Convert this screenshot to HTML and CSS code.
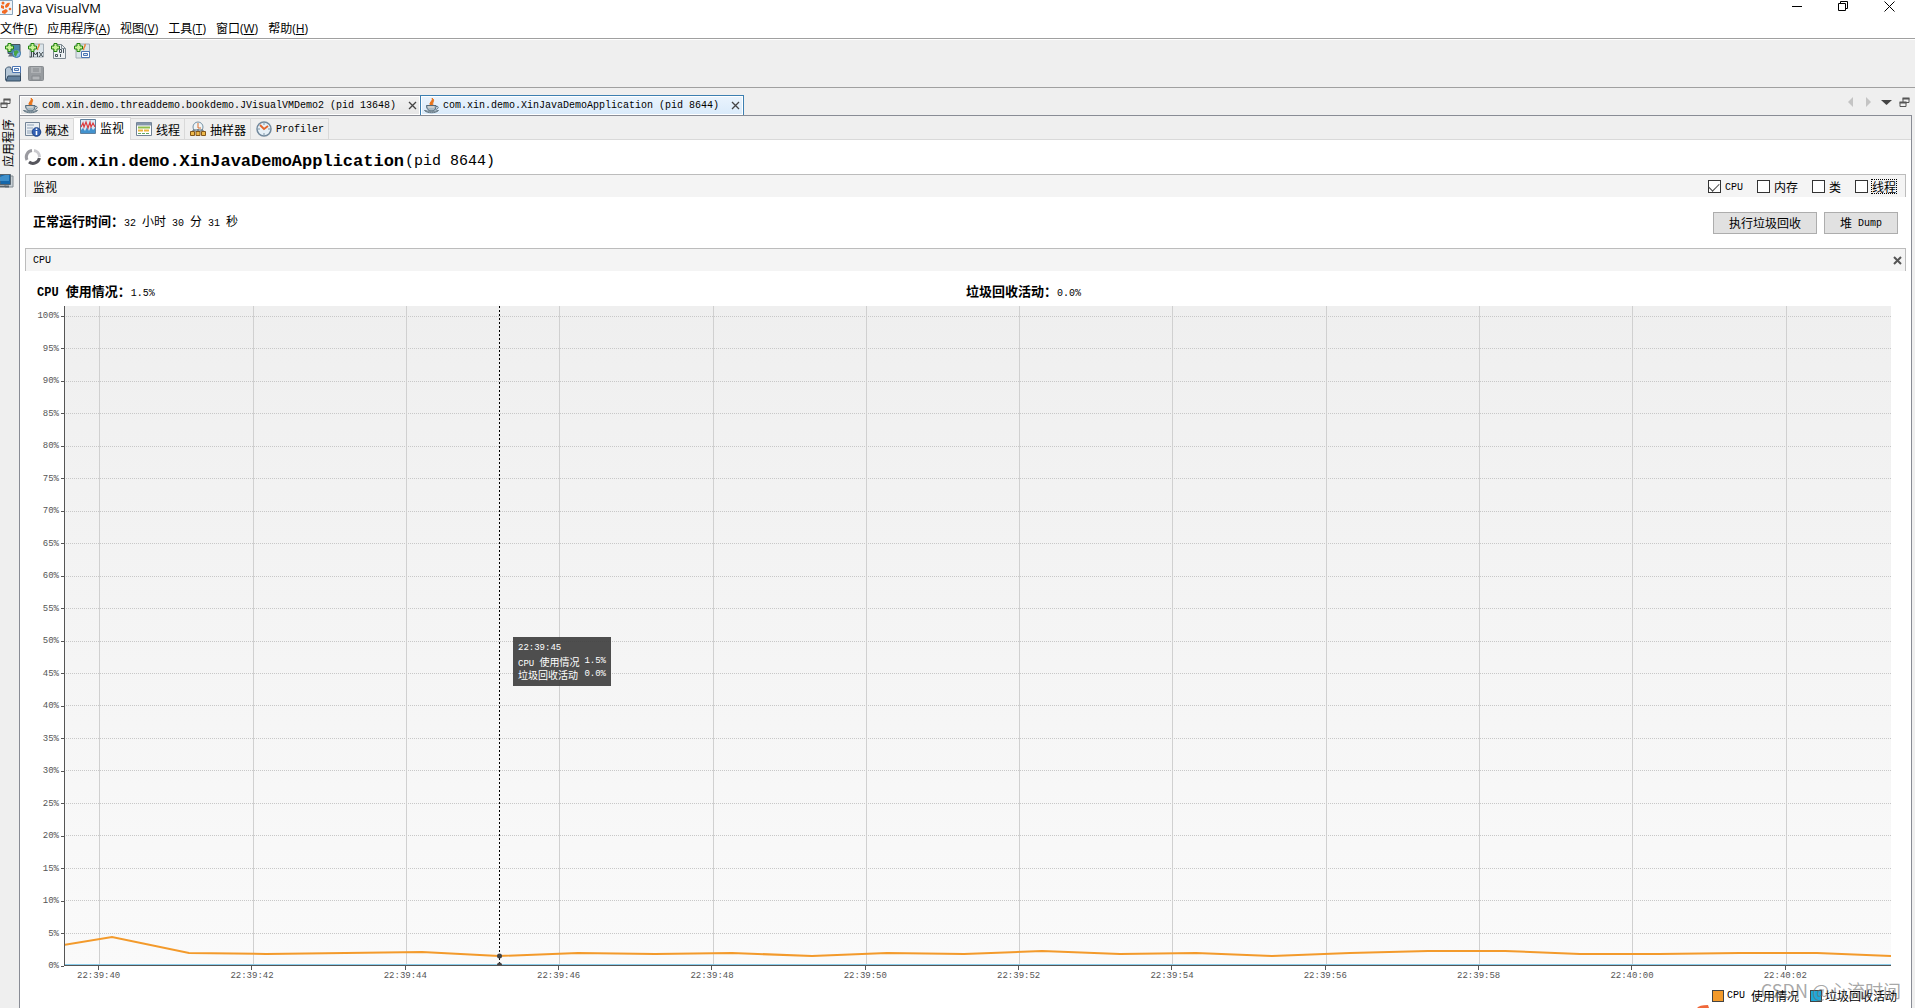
FILE: index.html
```html
<!DOCTYPE html>
<html lang="zh-CN">
<head>
<meta charset="utf-8">
<title>Java VisualVM</title>
<link rel="stylesheet" href="styles.css">
</head>
<body>
<svg class="defs" aria-hidden="true">
  <symbol id="plus" viewBox="0 0 16 16"><path d="M3 .5h3v2.500h2.500v3H6v2.500H3V6H.5V3H3z" fill="#c9f29a" stroke="#23850f"/></symbol>
  <symbol id="java" viewBox="0 0 16 16"><path d="M7.500 8C3 5 10 3 8 0c4 3-1 4 1.500 8z" fill="#e8741c" stroke="#e8741c"/><path d="M2.500 7.500h9.500c0 4-2 5.500-4.500 5.500s-5-1.500-5-5.500z" fill="#a9bac5" stroke="#546b7b"/><path d="M12 8.500c3-1 3 2.500-.5 3" fill="none" stroke="#546b7b"/><path d="M.5 12.500c3 3 11 3 14 0-3 1-11 1-14 0z" fill="#b9c5cd" stroke="#607481"/><path d="M4 9h6" stroke="#efe2d5"/></symbol>
  <symbol id="restore" viewBox="0 0 11 11"><path d="M4 5V1.500h6v4H7M1 5.500h6v4H1z" fill="none" stroke="#555"/><path d="M3.500 1.500h7M.5 5.500h7" stroke="#555" stroke-width="2"/></symbol>
  <symbol id="cross" viewBox="0 0 9 9"><path d="M1 1l7 7M8 1L1 8" stroke="currentColor" stroke-width="1.300"/></symbol>
</svg>

<header class="titlebar">
  <svg class="app-icon" viewBox="0 0 14 16"><path d="M-2 .5h14.500v14H-2" fill="#eef4f9" stroke="#89a5bd"/><path d="M5 7c0-3 3-5 5-4-1 2-1 4-4 5zM1 5l3 1v3L1 8zM2 11l4-2 2 2-3 3-3-1z" fill="#f26a24"/><circle cx="10" cy="9" r="1.300" fill="#f26a24"/><circle cx="3" cy="3" r="1.500" fill="#f26a24"/></svg>
  <span class="app-name">Java VisualVM</span>
  <div class="window-buttons">
    <button aria-label="最小化"><svg width="11" height="11"><path d="M0 5.500h10" stroke="#000"/></svg></button>
    <button aria-label="还原"><svg width="11" height="11"><path d="M.5 2.500h7v7h-7zM2.500 2V.5h7v7H8" fill="none" stroke="#000"/></svg></button>
    <button aria-label="关闭"><svg width="11" height="11"><path d="M.5.5l10 10M10.500.5l-10 10" stroke="#000"/></svg></button>
  </div>
</header>
<nav class="menubar">
  <button>文件(<u>F</u>)</button><button>应用程序(<u>A</u>)</button><button>视图(<u>V</u>)</button><button>工具(<u>T</u>)</button><button>窗口(<u>W</u>)</button><button>帮助(<u>H</u>)</button>
</nav>
<div class="toolbars">
  <div class="toolbar">
    <button aria-label="添加远程主机"><svg viewBox="0 0 16 16"><path d="M3 1.500h12v9H3z" fill="#4b89a8" stroke="#46545e"/><path d="M3 13.500h7l-1-3H5z" fill="#67747c"/><circle cx="11.500" cy="10.500" r="4" fill="#85b8e8" stroke="#3974a6"/><path d="M9 8l3-1 2 2-2 2-1 3-2-2z" fill="#48a447"/><use href="#plus"/></svg></button>
    <button aria-label="添加 JMX 连接"><svg viewBox="0 0 16 16"><path d="M2 1h13.500v13H2z" fill="#dce5ea" stroke="#a2acb4"/><path d="M10 7c-2-2 2-3 1-6" fill="none" stroke="#e88233" stroke-width="1.500"/><path d="M3.500 9v5H1.500M5.500 14V9l2 3 2-3v5M11 9l4 5M15 9l-4 5" fill="none" stroke="#414b50"/><use href="#plus"/></svg></button>
    <button aria-label="添加核心 Dump"><svg viewBox="0 0 16 16"><path d="M2.500 1.500h8l4 4v10h-12z" fill="#eef1f3" stroke="#7e8991"/><path d="M10.500 1.500v4h4" fill="none" stroke="#7e8991"/><path d="M8.500 6.500h2v3h-2zM12.500 6v4M4.500 11.500h2v2h-2zM9.500 11v3" fill="none" stroke="#47545d"/><use href="#plus"/></svg></button>
    <button aria-label="添加快照"><svg viewBox="0 0 16 16"><path d="M2 1h13.500v14H2z" fill="#dce5ea" stroke="#a2acb4"/><path d="M10 7c-2-2 2-3 1-6" fill="none" stroke="#e88233" stroke-width="1.500"/><path d="M7.500 8.500h8v6h-8z" fill="#fff" stroke="#4c75b2"/><path d="M9.500 10.500h4v2h-4z" fill="#d8e8fa" stroke="#4c75b2"/><use href="#plus"/></svg></button>
  </div>
  <div class="toolbar">
    <button aria-label="打开"><svg viewBox="0 0 16 16"><path d="M.5 14V3l2-2h3l1 3h9v10z" fill="#b5c6d6" stroke="#485f76"/><path d="M7.500.5h8v6h-8z" fill="#fff" stroke="#4c75b2"/><path d="M9.500 2.500h4v2h-4z" fill="#d8e8fa" stroke="#4c75b2"/><path d="M1 15l2-5h12.500v5z" fill="#64819e" stroke="#334a61"/></svg></button>
    <button aria-label="保存" disabled><svg viewBox="0 0 16 16"><rect x=".5" y=".5" width="15" height="14" rx="1" fill="#989ca0" stroke="#888c90"/><path d="M3 1h10v6H3z" fill="#aeb1b4"/><path d="M5 3h6M5 5h6M4 10h8v4H4z" fill="#b2b5b8" stroke="#84888c"/></svg></button>
  </div>
</div>

<div class="workspace">
  <aside class="side">
    <button aria-label="还原窗口组"><svg width="11" height="11"><use href="#restore"/></svg></button>
    <button class="side-label">应用程序</button>
    <svg class="side-icon" viewBox="0 0 14 16"><path d="M5 3h8v11H5z" fill="#c9d0d5" stroke="#818a91"/><path d="M0 1.500h10.500v10H0z" fill="#1667aa" stroke="#58656f"/><path d="M0 4l5-2h4v6H0z" fill="#3f8fca"/><path d="M0 13.500h9" stroke="#59636a" stroke-width="2"/></svg>
  </aside>
  <main class="editor">
    <div class="doc-tabs">
      <div class="doc-tab"><svg class="i16"><use href="#java"/></svg><a href="#demo2">com.xin.demo.threaddemo.bookdemo.JVisualVMDemo2 (pid 13648)</a><button aria-label="关闭标签"><svg width="9" height="9"><use href="#cross"/></svg></button></div>
      <div class="doc-tab current"><svg class="i16"><use href="#java"/></svg><a href="#app">com.xin.demo.XinJavaDemoApplication (pid 8644)</a><button aria-label="关闭标签"><svg width="9" height="9"><use href="#cross"/></svg></button></div>
      <div class="doc-nav">
        <button aria-label="向左滚动"><svg width="11" height="11"><path d="M8 0v10L3 5z" fill="#c4c4c4"/></svg></button>
        <button aria-label="向右滚动"><svg width="11" height="11"><path d="M3 0v10l5-5z" fill="#c4c4c4"/></svg></button>
        <button aria-label="文档列表"><svg width="11" height="11"><path d="M0 3h11L5.500 8z" fill="#444"/></svg></button>
        <button aria-label="还原"><svg width="11" height="11"><use href="#restore"/></svg></button>
      </div>
    </div>
    <div class="frame">
      <nav class="views">
        <a class="view" href="#overview"><svg class="i16" viewBox="0 0 16 16"><path d="M.5 1.500h14v13H.5z" fill="#e9eef3" stroke="#728396"/><path d="M2 4h7M2 7h6M2 10h5M2 12h5" stroke="#8fa2b7"/><circle cx="11.500" cy="11" r="4.300" fill="#315fb4" stroke="#183f86"/><path d="M11.500 10v4M11.500 7.500v1.500" stroke="#fff" stroke-width="1.600"/></svg>概述</a>
        <a class="view current" href="#monitor"><svg class="i16" viewBox="0 0 16 16"><path d="M.5.5h15v14H.5z" fill="#d9e9f5" stroke="#60809d"/><path d="M1 14v-3l2-2 2 3 2-4 2 4 2-4 2 3 2-2v5z" fill="#4292ce"/><path d="M1 8l2-4 1 4 2-5 2 6 2-6 1 5 2-4 2 4" fill="none" stroke="#dd3c3f" stroke-width="1.200"/></svg>监视</a>
        <a class="view" href="#threads"><svg class="i16" viewBox="0 0 16 16"><path d="M.5 1.500h15v13H.5z" fill="#fff" stroke="#728396"/><path d="M1 3h14" stroke="#8395aa" stroke-width="3"/><path d="M2 6.500h12" stroke="#8fbd4b" stroke-width="2"/><path d="M2 9.500h12" stroke="#edb43e" stroke-width="2" stroke-dasharray="5 1"/><path d="M2 12.500h12" stroke="#63aa63" stroke-dasharray="3 1"/></svg>线程</a>
        <a class="view" href="#sampler"><svg class="i16" viewBox="0 0 16 16"><circle cx="8" cy="6" r="5" fill="#eef5f8" stroke="#7792a5"/><path d="M8 2v5h3" fill="none" stroke="#df6f2b"/><path d="M3 11V9h10v2M8 8v3" fill="none" stroke="#52626d"/><path d="M.5 10.500h4v4h-4zM6 10.500h4v4H6zM11.500 10.500h4v4h-4z" fill="#edb84a" stroke="#83561a"/></svg>抽样器</a>
        <a class="view" href="#profiler"><svg class="i16" viewBox="0 0 16 16"><circle cx="8" cy="8" r="7" fill="#e6f0f7" stroke="#72899d" stroke-width="1.500"/><path d="M8 2v2M8 12v2M2 8h2M12 8h2" stroke="#7c95a9"/><path d="M4 4l4 4 4-3" fill="none" stroke="#e2642c" stroke-width="1.800"/></svg><span class="mono">Profiler</span></a>
      </nav>
      <h1 class="heading"><svg class="i16" viewBox="0 0 16 16"><path d="M2 11A6.500 6.500 0 0 1 7 1.600" fill="none" stroke="#9a9aa0" stroke-width="3"/><path d="M9 1.600A6.500 6.500 0 0 1 14.500 8" fill="none" stroke="#c9c9ce" stroke-width="3"/><path d="M14.400 9A6.500 6.500 0 0 1 4 13" fill="none" stroke="#55555c" stroke-width="3"/></svg><b>com.xin.demo.XinJavaDemoApplication</b><span>(pid 8644)</span></h1>
      <section class="bar">
        <h2>监视</h2>
        <div class="checks">
          <label><input type="checkbox" checked><span class="mono">CPU</span></label>
          <label><input type="checkbox">内存</label>
          <label><input type="checkbox">类</label>
          <label><input type="checkbox"><span class="focused">线程</span></label>
        </div>
      </section>
      <div class="summary">
        <p><b>正常运行时间：</b><span class="mono">32 </span>小时<span class="mono"> 30 </span>分<span class="mono"> 31 </span>秒</p>
        <div class="actions"><button>执行垃圾回收</button><button>堆<span class="mono"> Dump</span></button></div>
      </div>
      <section class="bar">
        <h2 class="mono">CPU</h2>
        <button class="bar-close" aria-label="隐藏 CPU"><svg width="9" height="9"><path d="M1 1l7 7M8 1L1 8" stroke="#555" stroke-width="2"/></svg></button>
      </section>
      <div class="readings">
        <p><b><span class="mono">CPU </span>使用情况：</b><span class="mono">1.5%</span></p>
        <p><b>垃圾回收活动：</b><span class="mono">0.0%</span></p>
      </div>
      <div class="chart">
        <div class="y-axis"><span>100%</span><span>95%</span><span>90%</span><span>85%</span><span>80%</span><span>75%</span><span>70%</span><span>65%</span><span>60%</span><span>55%</span><span>50%</span><span>45%</span><span>40%</span><span>35%</span><span>30%</span><span>25%</span><span>20%</span><span>15%</span><span>10%</span><span>5%</span><span>0%</span></div>
        <div class="plot">
          <svg class="graph" viewBox="1 0 1826 659" preserveAspectRatio="none">
            <g class="rows" id="rows"></g>
            <path class="cols" d="M35.500 0V659M189.500 0V659M342.500 0V659M495.500 0V659M649.500 0V659M802.500 0V659M955.500 0V659M1108.500 0V659M1262.500 0V659M1415.500 0V659M1568.500 0V659M1722.500 0V659"/>
            <path d="M0 658.500H1827" stroke="#8accea"/>
            <polyline class="usage" points="0,639 48,631 125,647 202,648 281,647 358,646 435,650 514,647 591,648 668,647 748,650 823,647 900,648 978,645 1056,648 1132,647 1208,650 1286,647 1364,645 1441,645 1516,648 1595,648 1676,647 1753,647 1827,650"/>
            <path d="M435.500 0V659" stroke="#000" stroke-dasharray="2 2"/>
            <circle cx="435.500" cy="650" r="2.500" fill="#444"/><path d="M433 659a2.500 2.500 0 0 1 5 0" fill="#444"/>
          </svg>
          <div class="tooltip"><div><span class="tiny">22:39:45</span></div><div><span><span class="tiny">CPU </span>使用情况</span><span class="tiny">1.5%</span></div><div><span>垃圾回收活动</span><span class="tiny">0.0%</span></div></div>
        </div>
        <div class="x-axis"><span>22:39:40</span><span>22:39:42</span><span>22:39:44</span><span>22:39:46</span><span>22:39:48</span><span>22:39:50</span><span>22:39:52</span><span>22:39:54</span><span>22:39:56</span><span>22:39:58</span><span>22:40:00</span><span>22:40:02</span></div>
      </div>
      <div class="legend"><span class="key cpu"><span class="mono">CPU </span>使用情况</span><span class="key gc">垃圾回收活动</span></div>
    </div>
  </main>
</div>
<div class="watermark">CSDN @心流时间</div>
<svg class="corner-mark" viewBox="0 0 12 3"><path d="M0 3Q2 0 11 0l1 3z" fill="#f0683a"/></svg>
<script src="chart.js"></script>
</body>
</html>
```
FILE: styles.css
```css
* { box-sizing: border-box; }
body { margin: 0; height: 100vh; display: flex; flex-direction: column; overflow: hidden; background: #efefef; color: #000; font: 12px/16px "Noto Sans CJK SC", sans-serif; }
button { border: 0; padding: 0; background: none; font: inherit; color: inherit; display: flex; align-items: center; justify-content: center; white-space: pre; }
a { color: inherit; text-decoration: none; }
h1, h2, p { margin: 0; font-weight: 400; font-size: 12px; }
svg { display: block; flex: none; overflow: visible; }
.defs { position: absolute; width: 0; height: 0; }
.i16 { width: 16px; height: 16px; }
.mono { font-family: "Liberation Mono", monospace; font-size: 10px; white-space: pre; }
.tiny { font-family: "Liberation Mono", monospace; font-size: 9px; white-space: pre; }

.titlebar { height: 18px; flex: none; display: flex; background: #fff; font-family: "Open Sans", sans-serif; font-size: 13px; }
.app-icon { width: 14px; height: 16px; }
.app-name { margin-left: 4px; }
.window-buttons { margin-left: auto; display: flex; gap: 35px; padding-right: 20px; align-items: flex-start; }
.window-buttons button { padding-top: 1px; }
.menubar { height: 20px; flex: none; display: flex; gap: 10px; align-items: center; padding-top: 2px; background: #fff; font-family: "Open Sans", "Noto Sans CJK SC", sans-serif; }
.toolbars { height: 50px; flex: none; border-top: 1px solid #a0a0a0; border-bottom: 1px solid #a0a0a0; padding: 4px 0 0 5px; display: flex; flex-direction: column; gap: 7px; box-shadow: inset 0 1px #fff; }
.toolbar { display: flex; gap: 7px; }
.toolbar svg { width: 16px; height: 16px; }

.workspace { flex: 1; min-height: 0; display: flex; padding-top: 7px; }
.side { width: 19px; flex: none; display: flex; flex-direction: column; align-items: flex-start; padding-top: 3px; gap: 6px; }
.side-label { writing-mode: vertical-rl; text-orientation: sideways; transform: rotate(180deg); margin-top: 4px; }
.side-icon { width: 14px; height: 16px; }
.editor { flex: 1; min-width: 0; display: flex; flex-direction: column; padding-right: 3px; }
.doc-tabs { height: 20px; flex: none; display: flex; }
.doc-tab { height: 20px; display: flex; align-items: center; padding: 0 3px; border: 1px solid #898c95; border-width: 1px 1px 0 1px; background: linear-gradient(#f2f2f2, #e6e6e6); box-shadow: inset 0 0 0 1px #fff; font: 10px/20px "Liberation Mono", monospace; color: #000; }
.doc-tab a { margin: 0 12px 0 3px; padding-top: 1px; }
.doc-tab button { color: #444; }
.doc-tab.current { border-color: #3c7fb1; background: linear-gradient(#eaf4fd, #d9eafa); margin-left: -1px; }
.doc-nav { margin-left: auto; display: flex; gap: 7px; align-items: center; padding: 0 2px 6px 0; }
.frame { flex: 1; min-height: 0; display: flex; flex-direction: column; border: 1px solid #898c95; border-bottom: 0; background: #fff; }

.views { height: 24px; flex: none; display: flex; align-items: flex-end; background: #efefef; box-shadow: inset 0 -1px #d9d9d9; }
.view { height: 22px; display: flex; align-items: center; gap: 4px; padding: 2px 4px 0 5px; border: 1px solid #d9d9d9; border-left: 0; }
.view .i16 { margin-bottom: 2px; }
.view.current { height: 23px; background: #fff; border-bottom: 0; padding: 0 6px 2px; }
.heading { height: 34px; flex: none; display: flex; align-items: center; padding: 10px 0 0 5px; font: 17px/24px "Liberation Mono", monospace; }
.heading .i16 { margin-bottom: 11px; }
.heading b { margin-left: 6px; }
.heading span { font-size: 15px; margin-left: 1px; }
.bar { height: 23px; flex: none; margin: 0 5px; display: flex; align-items: center; justify-content: space-between; padding: 1px 9px 0 7px; border: 1px solid #bcbcbc; border-bottom: 0; background: #f4f4f4; }
.bar-close { margin-right: -6px; }
.checks { display: flex; gap: 14px; }
.checks label { display: flex; align-items: center; gap: 4px; }
.checks .mono { padding-top: 2px; }
input { appearance: none; width: 13px; height: 13px; margin: 0; border: 1px solid #333; background: #fff; display: grid; place-items: center; }
input:checked::before { content: ""; width: 9px; height: 5px; border: solid #444; border-width: 0 0 1px 1px; transform: translateY(-1px) rotate(-45deg); }
.focused { outline: 1px dotted #000; line-height: 13px; }
.summary { height: 51px; flex: none; display: flex; align-items: center; justify-content: space-between; padding: 0 13px; }
.summary b, .readings b { font-size: 13px; }
.readings b .mono { font-size: 12px; }
.actions { display: flex; gap: 7px; }
.actions button { height: 22px; padding: 0 15px; border: 1px solid #adadad; background: #e1e1e1; }
.actions .mono { padding-top: 2px; }
.readings { height: 35px; flex: none; display: grid; grid-template-columns: 1fr 1fr; align-items: center; padding: 8px 16px 0 17px; }
.chart { flex: 1; min-height: 0; display: grid; grid-template-columns: 44px 1fr; grid-template-rows: 1fr 21px; margin-right: 20px; }
.y-axis { display: flex; flex-direction: column; justify-content: space-between; margin: 4px 0 -6px; font: 9px/12px "Liberation Mono", monospace; color: #555; }
.y-axis span { display: flex; justify-content: flex-end; align-items: center; gap: 2px; }
.y-axis span::after { content: ""; width: 3px; height: 1px; background: #555; }
.plot { position: relative; min-height: 0; background: linear-gradient(#efefef, #fafafa); border-left: 1px solid #555; border-bottom: 1px solid #555; }
.graph { position: absolute; inset: 0; width: 100%; height: 100%; overflow: hidden; }
.rows, .cols { fill: none; stroke: #d0d0d0; }
.rows { stroke-dasharray: 1 1; stroke: #c8c8c8; }
.usage { fill: none; stroke: #f39a2b; stroke-width: 2; }
.tooltip { position: absolute; left: 448px; top: 331px; width: 98px; padding: 5px; background: rgba(60, 60, 60, .9); color: #fff; font-size: 10px; line-height: 13px; }
.tooltip div { display: flex; justify-content: space-between; height: 13px; }
.x-axis { grid-column: 2; display: grid; grid-template-columns: repeat(12, 1fr); margin: 0 29px 0 -42px; text-align: center; font: 9px/12px "Liberation Mono", monospace; color: #555; }
.x-axis span::before { content: ""; display: block; width: 1px; height: 4px; margin: 0 auto; background: #555; }
.legend { height: 21px; flex: none; display: flex; justify-content: flex-end; gap: 11px; padding: 1px 14px 0 0; }
.key { display: flex; align-items: center; height: 16px; }
.key::before { content: ""; width: 10px; height: 10px; margin-right: 3px; border: 1px solid #444; }
.cpu::before { background: #f39a2b; }
.gc::before { background: #1fa8d8; }
.watermark { position: absolute; right: 14px; bottom: 6px; font-size: 18px; line-height: 24px; color: rgba(110, 110, 110, .6); }
.corner-mark { position: absolute; right: 206px; bottom: 0; width: 12px; height: 3px; }
```
FILE: chart.js
```js
// Horizontal grid: 100% down to 5%, evenly spaced above the baseline.
const rows = document.getElementById("rows");
for (let i = 0; i < 20; i++) {
  const line = document.createElementNS("http://www.w3.org/2000/svg", "path");
  line.setAttribute("d", "M0 " + (Math.round(10 + i * 32.45) + 0.5) + "H1827");
  rows.append(line);
}
```
